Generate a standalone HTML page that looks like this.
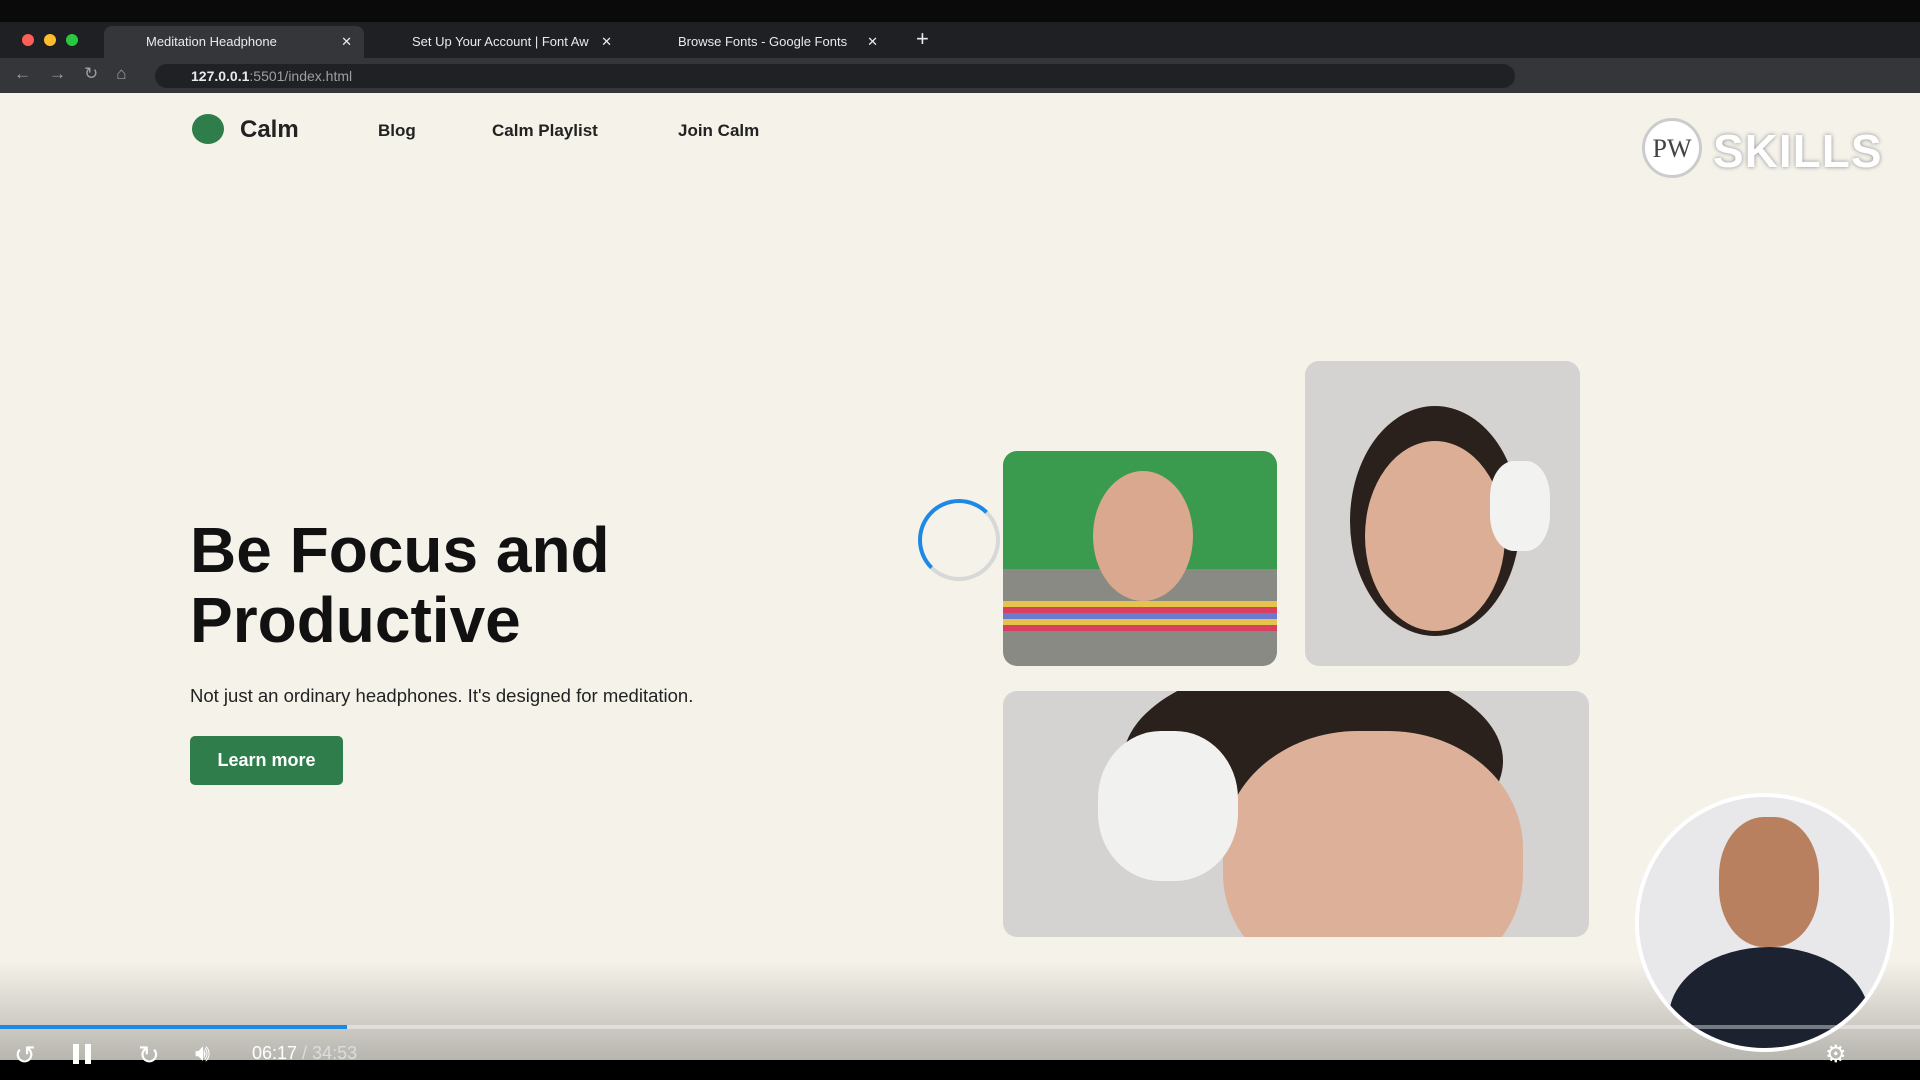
<!DOCTYPE html>
<html><head><meta charset="utf-8"><style>
*{margin:0;padding:0;box-sizing:border-box}
body{width:1920px;height:1080px;overflow:hidden;background:#f5f2ea;font-family:"Liberation Sans",sans-serif;position:relative}
.abs{position:absolute}
.top{left:0;top:0;width:1920px;height:22px;background:#0a0a0a}
.tabs{left:0;top:22px;width:1920px;height:36px;background:#1f2023}
.addr{left:0;top:58px;width:1920px;height:35px;background:#35363a}
.tab{top:26px;height:32px;border-radius:8px 8px 0 0;color:#e8eaed;font-size:13px;line-height:32px;padding-left:42px}
.dot{width:12px;height:12px;border-radius:50%;top:34px}
.url{left:155px;top:64px;width:1360px;height:24px;border-radius:12px;background:#202124;color:#e8eaed;font-size:14px;line-height:24px;padding-left:36px}
.nav{top:121px;font-size:17px;color:#222;font-weight:bold}
h1{position:absolute;left:190px;top:515px;font-size:64px;line-height:70px;color:#111;font-weight:bold}
.img{border-radius:14px;overflow:hidden}
</style></head><body>
<div class="abs top"></div>
<div class="abs tabs"></div>
<div class="abs dot" style="left:22px;background:#ff5f57"></div>
<div class="abs dot" style="left:44px;background:#febc2e"></div>
<div class="abs dot" style="left:66px;background:#28c840"></div>
<div class="abs tab" style="left:104px;width:260px;background:#35363a">Meditation Headphone<span style="position:absolute;right:12px">✕</span></div>
<div class="abs tab" style="left:370px;width:254px">Set Up Your Account | Font Aw<span style="position:absolute;right:12px">✕</span></div>
<div class="abs tab" style="left:636px;width:254px">Browse Fonts - Google Fonts<span style="position:absolute;right:12px">✕</span></div>
<div class="abs" style="left:916px;top:26px;color:#e8eaed;font-size:22px">+</div>
<div class="abs addr"></div>
<div class="abs" style="left:14px;top:64px;color:#9aa0a6;font-size:17px;letter-spacing:18px">←→↻⌂</div>
<div class="abs url"><b>127.0.0.1</b><span style="color:#9aa0a6">:5501/index.html</span></div>

<div class="abs" style="left:192px;top:114px;width:32px;height:30px;border-radius:50%;background:#2f7d4b"></div>
<div class="abs" style="left:240px;top:116px;font-size:24px;font-weight:bold;color:#222">Calm</div>
<div class="abs nav" style="left:378px">Blog</div>
<div class="abs nav" style="left:492px">Calm Playlist</div>
<div class="abs nav" style="left:678px">Join Calm</div>

<div class="abs" style="left:1642px;top:118px;width:60px;height:60px;border-radius:50%;background:#fff;border:3px solid #ccc;font:26px 'Liberation Serif',serif;color:#444;text-align:center;line-height:56px">PW</div>
<div class="abs" style="left:1713px;top:124px;font-size:46px;font-weight:bold;color:#fff;text-shadow:0 0 4px #888;letter-spacing:1px">SKILLS</div>

<h1>Be Focus and<br>Productive</h1>
<div class="abs" style="left:190px;top:685px;font-size:18.5px;color:#222">Not just an ordinary headphones. It's designed for meditation.</div>
<div class="abs" style="left:190px;top:736px;width:153px;height:49px;border-radius:5px;background:#2f7d4b;color:#fff;font-size:18px;font-weight:bold;text-align:center;line-height:49px">Learn more</div>

<div class="abs" style="left:918px;top:499px;width:82px;height:82px;border-radius:50%;border:4px solid #d8d8d8;border-top-color:#1e88e5;border-left-color:#1e88e5"></div>

<div class="abs img" style="left:1003px;top:451px;width:274px;height:215px;background:linear-gradient(#3a9a4e 0 55%,#8a8a85 55%)">
<div class="abs" style="left:90px;top:20px;width:100px;height:130px;border-radius:50%;background:#d9a88f"></div>
<div class="abs" style="left:0;top:150px;width:274px;height:30px;background:repeating-linear-gradient(#e6c34a 0 6px,#d94060 6px 12px,#6a7ad0 12px 18px)"></div></div>
<div class="abs img" style="left:1305px;top:361px;width:275px;height:305px;background:#d4d3d1">
<div class="abs" style="left:45px;top:45px;width:170px;height:230px;border-radius:50%;background:#2a211c"></div>
<div class="abs" style="left:60px;top:80px;width:140px;height:190px;border-radius:50%;background:#dcae95"></div>
<div class="abs" style="left:185px;top:100px;width:60px;height:90px;border-radius:40%;background:#f2f2f0"></div></div>
<div class="abs img" style="left:1003px;top:691px;width:586px;height:246px;background:#d4d3d1">
<div class="abs" style="left:120px;top:-30px;width:380px;height:200px;border-radius:50%;background:#2a211c"></div>
<div class="abs" style="left:220px;top:40px;width:300px;height:260px;border-radius:45%;background:#ddb09a"></div>
<div class="abs" style="left:95px;top:40px;width:140px;height:150px;border-radius:45%;background:#f1f1ef"></div></div>

<div class="abs" style="left:0;top:960px;width:1920px;height:100px;background:linear-gradient(rgba(0,0,0,0),rgba(0,0,0,.25))"></div>
<div class="abs" style="left:1635px;top:793px;width:259px;height:259px;border-radius:50%;background:#e8e8ea;border:4px solid #fff;overflow:hidden">
<div class="abs" style="left:30px;top:150px;width:200px;height:140px;border-radius:50%;background:#1c2230"></div>
<div class="abs" style="left:80px;top:20px;width:100px;height:130px;border-radius:45%;background:#b98060"></div></div>
<div class="abs" style="left:0;top:1025px;width:1920px;height:4px;background:rgba(255,255,255,.4)"></div>
<div class="abs" style="left:0;top:1025px;width:347px;height:4px;background:#1e88e5"></div>
<div class="abs" style="left:0;top:1060px;width:1920px;height:20px;background:#000"></div>
<div class="abs" style="left:14px;top:1040px;color:#fff;font-size:26px">↺</div>
<div class="abs" style="left:73px;top:1044px;width:6px;height:20px;background:#fff"></div>
<div class="abs" style="left:85px;top:1044px;width:6px;height:20px;background:#fff"></div>
<div class="abs" style="left:138px;top:1040px;color:#fff;font-size:26px">↻</div>
<div class="abs" style="left:195px;top:1040px;color:#fff;font-size:24px">🔊︎</div>
<div class="abs" style="left:252px;top:1043px;color:#fff;font-size:18px">06:17 <span style="color:#ddd">/ 34:53</span></div>
<div class="abs" style="left:1825px;top:1040px;color:#fff;font-size:24px">⚙</div>
</body></html>
